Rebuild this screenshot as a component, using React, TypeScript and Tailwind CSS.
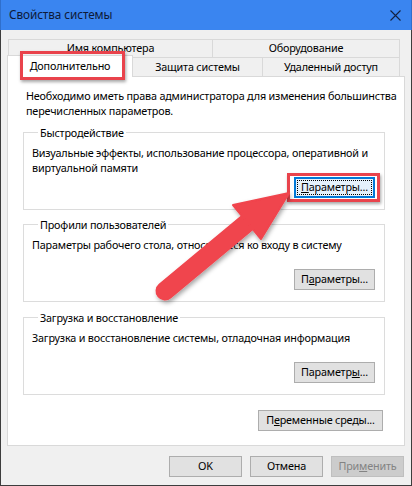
import React from "react";

function Btn({
  children,
  className = "",
  disabled = false,
}: {
  children: React.ReactNode;
  className?: string;
  disabled?: boolean;
}) {
  return (
    <div
      className={
        "h-[21px] flex items-center justify-center border leading-none whitespace-nowrap " +
        (disabled
          ? "bg-[#cccccc] border-[#bfbfbf] text-[#838383] "
          : "bg-[#e1e1e1] border-[#adadad] text-black ") +
        className
      }
    >
      {children}
    </div>
  );
}

function Group({
  title,
  lines,
  btn,
  className = "",
}: {
  title: string;
  lines: React.ReactNode;
  btn: React.ReactNode;
  className?: string;
}) {
  return (
    <fieldset className={"w-[362px] border border-[#dcdcdc] pl-[8px] pr-[9px] pb-[11px] " + className}>
      <legend className="ml-[6px] px-[2px] leading-[15px]">{title}</legend>
      <div className="pt-[5px] h-[37px] leading-[15px] whitespace-nowrap">{lines}</div>
      <div className="flex justify-end">{btn}</div>
    </fieldset>
  );
}

export default function App() {
  return (
    <div className="relative w-[412px] h-[486px] overflow-hidden font-['Noto_Sans',sans-serif] text-[10.8px] tracking-[-0.18px] text-black">
      <div className="w-full h-full flex flex-col bg-[#f0f0f0] border-x border-b border-[#3d3d3d]">
        {/* Title bar */}
        <div className="h-[30px] -mx-px bg-[#3a85f0] border-x border-[#2f6fcc] flex items-center justify-between pl-[8px] pr-[10px] shrink-0">
          <span className="text-[11.8px] tracking-[-0.1px] text-[#0e1a38] leading-none">Свойства системы</span>
          <svg width="11" height="11" viewBox="0 0 11 11">
            <path d="M0.5 0.5 L10.5 10.5 M10.5 0.5 L0.5 10.5" stroke="#14213f" strokeWidth="1.1" fill="none" />
          </svg>
        </div>

        {/* Body */}
        <div className="flex-1 flex flex-col px-[6px] pt-[9px]">
          {/* Tabs row 1 */}
          <div className="flex h-[18px] ml-[1px]">
            <div className="w-[205px] border border-b-0 border-[#d9d9d9] flex items-center justify-center leading-none">
              Имя компьютера
            </div>
            <div className="w-[187px] border border-b-0 border-l-0 border-[#d9d9d9] flex items-center justify-center leading-none">
              Оборудование
            </div>
          </div>
          {/* Tabs row 2 */}
          <div className="flex h-[19px] items-end">
            <div className="relative z-10 w-[126px] h-[22px] -mb-px bg-white border border-b-0 border-[#d9d9d9] flex items-center justify-center leading-none pb-[1px]">
              Дополнительно
            </div>
            <div className="w-[130px] h-[19px] border border-b-0 border-l-0 border-[#d9d9d9] flex items-center justify-center leading-none">
              Защита системы
            </div>
            <div className="w-[137px] h-[19px] border border-b-0 border-l-0 border-[#d9d9d9] flex items-center justify-center leading-none">
              Удаленный доступ
            </div>
          </div>

          {/* Panel */}
          <div className="h-[370px] bg-white border border-[#d9d9d9] flex flex-col pt-[11px] pl-[15px]">
            <div className="pl-[3px] leading-[15px] whitespace-nowrap">
              <div>Необходимо иметь права администратора для изменения большинства</div>
              <div>перечисленных параметров.</div>
            </div>

            <Group
              className="mt-[7px]"
              title="Быстродействие"
              lines={
                <>
                  <div>Визуальные эффекты, использование процессора, оперативной и</div>
                  <div>виртуальной памяти</div>
                </>
              }
              btn={
                <div className="w-[81px] h-[21px] bg-[#e5f1fb] border-2 border-[#0078d7] p-[1px]">
                  <div className="w-full h-full border border-dotted border-black flex items-center justify-center leading-none whitespace-nowrap">
                    <span>
                      <span className="underline">П</span>араметры...
                    </span>
                  </div>
                </div>
              }
            />

            <Group
              className="mt-[7px]"
              title="Профили пользователей"
              lines={<div>Параметры рабочего стола, относящиеся ко входу в систему</div>}
              btn={
                <Btn className="w-[81px]">
                  <span>
                    П<span className="underline">а</span>раметры...
                  </span>
                </Btn>
              }
            />

            <Group
              className="mt-[8px]"
              title="Загрузка и восстановление"
              lines={<div>Загрузка и восстановление системы, отладочная информация</div>}
              btn={
                <Btn className="w-[81px]">
                  <span>
                    Параметр<span className="underline">ы</span>...
                  </span>
                </Btn>
              }
            />

            <div className="w-[360px] flex justify-end mt-[15px]">
              <Btn className="w-[125px]">
                <span>
                  П<span className="underline">е</span>ременные среды...
                </span>
              </Btn>
            </div>
          </div>

          {/* Bottom buttons */}
          <div className="flex justify-end gap-[8px] mt-[10px] pr-[1px]">
            <Btn className="w-[73px]">OK</Btn>
            <Btn className="w-[73px]">Отмена</Btn>
            <Btn className="w-[73px]" disabled>
              <span>
                При<span className="underline">м</span>енить
              </span>
            </Btn>
          </div>
        </div>
      </div>

      {/* Red highlight boxes */}
      <div className="absolute z-20 left-[20px] top-[51px] w-[105px] h-[29px] border-[3px] border-[#e9434c] shadow-[1px_2px_3px_rgba(0,0,0,0.35)]" />
      <div className="absolute z-20 left-[287px] top-[173px] w-[93px] h-[29px] border-[3px] border-[#e9434c] shadow-[1px_2px_3px_rgba(0,0,0,0.35)]" />

      {/* Arrow */}
      <svg className="absolute z-30 left-0 top-0 pointer-events-none" width="412" height="486" viewBox="0 0 412 486">
        <defs>
          <filter id="sh" x="-20%" y="-20%" width="140%" height="140%">
            <feDropShadow dx="1.5" dy="2.5" stdDeviation="2" floodColor="#000" floodOpacity="0.35" />
          </filter>
        </defs>
        <g filter="url(#sh)" fill="#f0444d" stroke="#f0444d">
          <line x1="165" y1="291" x2="248" y2="222" strokeWidth="19" strokeLinecap="round" />
          <polygon points="289,193 233,205 261,239" strokeWidth="2" strokeLinejoin="round" />
        </g>
      </svg>
    </div>
  );
}
